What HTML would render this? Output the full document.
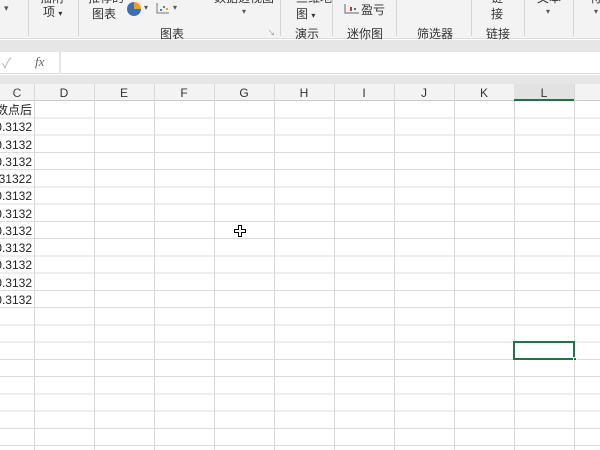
<!DOCTYPE html>
<html><head><meta charset="utf-8"><style>
*{margin:0;padding:0;box-sizing:border-box}
body{width:600px;height:450px;overflow:hidden;background:#fff;font-family:"Liberation Sans","Noto Sans CJK SC",sans-serif;position:relative}
.a{position:absolute}
.t{position:absolute;font-size:12px;color:#333;white-space:nowrap}
.vs{position:absolute;width:1px;background:#d5d5d5}
.gl{position:absolute;top:84px;width:1px;height:366px;background:#d8d8d8}
</style></head><body>
<!-- ribbon -->
<div class="a" style="left:0;top:0;width:600px;height:39px;background:#f3f3f3;border-bottom:1px solid #dadada"></div>
<div class="vs" style="left:28px;top:0;height:36px"></div>
<div class="vs" style="left:78px;top:0;height:36px"></div>
<div class="vs" style="left:280px;top:0;height:36px"></div>
<div class="vs" style="left:332px;top:0;height:36px"></div>
<div class="vs" style="left:396px;top:0;height:36px"></div>
<div class="vs" style="left:471px;top:0;height:36px"></div>
<div class="vs" style="left:524px;top:0;height:36px"></div>
<div class="vs" style="left:573px;top:0;height:36px"></div>
<div class="t" style="left:4px;top:3px;font-size:9px;color:#555">▾</div>
<div class="t" style="left:43px;top:3px">项 <span style="font-size:8px">▾</span></div>
<div class="t" style="left:40px;top:-11px">插附</div>
<div class="t" style="left:88px;top:-11px">推荐的</div>
<div class="t" style="left:92px;top:5px">图表</div>
<div class="a" style="left:127px;top:2px;width:14px;height:14px;border-radius:50%;background:conic-gradient(#f0a020 0 25%,#3a6fb5 25% 100%)"></div>
<div class="t" style="left:144px;top:3px;font-size:8px;color:#555">▾</div>
<svg class="a" style="left:156px;top:2px" width="14" height="12"><path d="M1 1V11H13" stroke="#777" fill="none"/><rect x="4" y="7" width="2" height="2" fill="#4a80c8"/><rect x="7" y="4" width="2" height="2" fill="#4a80c8"/><rect x="10" y="6" width="2" height="2" fill="#f0a020"/></svg>
<div class="t" style="left:173px;top:3px;font-size:8px;color:#555">▾</div>
<div class="t" style="left:214px;top:-11px">数据透视图</div>
<div class="t" style="left:242px;top:7px;font-size:8px;color:#555">▾</div>
<div class="t" style="left:160px;top:25px">图表</div>
<div class="t" style="left:268px;top:28px;font-size:7px;color:#888">↘</div>
<div class="t" style="left:296px;top:-11px">三维地</div>
<div class="t" style="left:296px;top:5px">图 <span style="font-size:8px">▾</span></div>
<div class="t" style="left:295px;top:25px">演示</div>
<svg class="a" style="left:344px;top:3px" width="16" height="12"><path d="M1 1V10H15" stroke="#666" fill="none"/><rect x="6" y="4" width="2" height="4" fill="#c33"/><rect x="10" y="5" width="2" height="2" fill="#666"/></svg>
<div class="t" style="left:361px;top:1px">盈亏</div>
<div class="t" style="left:347px;top:25px">迷你图</div>
<div class="t" style="left:417px;top:25px">筛选器</div>
<div class="t" style="left:491px;top:-11px">链</div>
<div class="t" style="left:491px;top:5px">接</div>
<div class="t" style="left:486px;top:25px">链接</div>
<div class="t" style="left:537px;top:-11px">文本</div>
<div class="t" style="left:546px;top:7px;font-size:8px;color:#555">▾</div>
<div class="t" style="left:590px;top:-11px">符</div>
<div class="t" style="left:594px;top:7px;font-size:8px;color:#555">▾</div>
<!-- bands -->
<div class="a" style="left:0;top:40px;width:600px;height:12px;background:#e6e6e6"></div>
<div class="a" style="left:0;top:52px;width:600px;height:22px;background:#fff;border-bottom:1px solid #d8d8d8"></div>
<div class="a" style="left:59px;top:52px;width:2px;height:22px;background:#e6e6e6"></div>
<div class="t" style="left:2px;top:53px;font-size:14px;color:#b8b8b8">✓</div>
<div class="t" style="left:35px;top:54px;font-family:'Liberation Serif',serif;font-style:italic;font-size:13px;color:#666">fx</div>
<div class="a" style="left:0;top:75px;width:600px;height:9px;background:#e6e6e6"></div>
<!-- headers -->
<div class="a" style="left:0;top:84px;width:600px;height:17px;background:#f3f3f3;border-bottom:1px solid #c8c8c8"></div>
<!-- grid rows -->
<div class="a" style="left:0;top:101px;width:600px;height:349px;background-image:repeating-linear-gradient(to bottom,transparent 0,transparent 16.26px,#dcdcdc 16.26px,#dcdcdc 17.26px)"></div>
<div class="gl" style="left:34px"></div><div class="gl" style="left:94px"></div><div class="gl" style="left:154px"></div><div class="gl" style="left:214px"></div><div class="gl" style="left:274px"></div><div class="gl" style="left:334px"></div><div class="gl" style="left:394px"></div><div class="gl" style="left:454px"></div><div class="gl" style="left:514px"></div><div class="gl" style="left:574px"></div>
<div class="t" style="left:0;top:86px;width:34px;text-align:center;color:#444">C</div>
<div class="t" style="left:34px;top:86px;width:60px;text-align:center">D</div>
<div class="t" style="left:94px;top:86px;width:60px;text-align:center">E</div>
<div class="t" style="left:154px;top:86px;width:60px;text-align:center">F</div>
<div class="t" style="left:214px;top:86px;width:60px;text-align:center">G</div>
<div class="t" style="left:274px;top:86px;width:60px;text-align:center">H</div>
<div class="t" style="left:334px;top:86px;width:60px;text-align:center">I</div>
<div class="t" style="left:394px;top:86px;width:60px;text-align:center">J</div>
<div class="t" style="left:454px;top:86px;width:60px;text-align:center">K</div>
<div class="a" style="left:514px;top:84px;width:60px;height:17px;background:#e2e2e2;border-bottom:2px solid #217346"></div>
<div class="t" style="left:514px;top:86px;width:60px;text-align:center">L</div>
<!-- data -->
<div style="position:absolute;left:0;top:102px;width:33px;height:210px;overflow:hidden">
<div style="position:absolute;right:1px;top:0;width:80px;text-align:right;font-size:12px;line-height:17.26px;color:#222;white-space:nowrap">
<div>小数点后</div><div>0.3132</div><div>0.3132</div><div>0.3132</div><div>0.31322</div><div>0.3132</div><div>0.3132</div><div>0.3132</div><div>0.3132</div><div>0.3132</div><div>0.3132</div><div>0.3132</div>
</div></div>
<!-- selection -->
<div class="a" style="left:513px;top:341px;width:62px;height:19px;border:2px solid #217346"></div>
<div class="a" style="left:573px;top:357px;width:4px;height:4px;background:#217346;border:1px solid #fff"></div>
<!-- cursor -->
<svg class="a" style="left:234px;top:225px" width="12" height="12"><path d="M4.5 0.5H7.5V4.5H11.5V7.5H7.5V11.5H4.5V7.5H0.5V4.5H4.5Z" fill="#fff" stroke="#000"/></svg>
</body></html>
